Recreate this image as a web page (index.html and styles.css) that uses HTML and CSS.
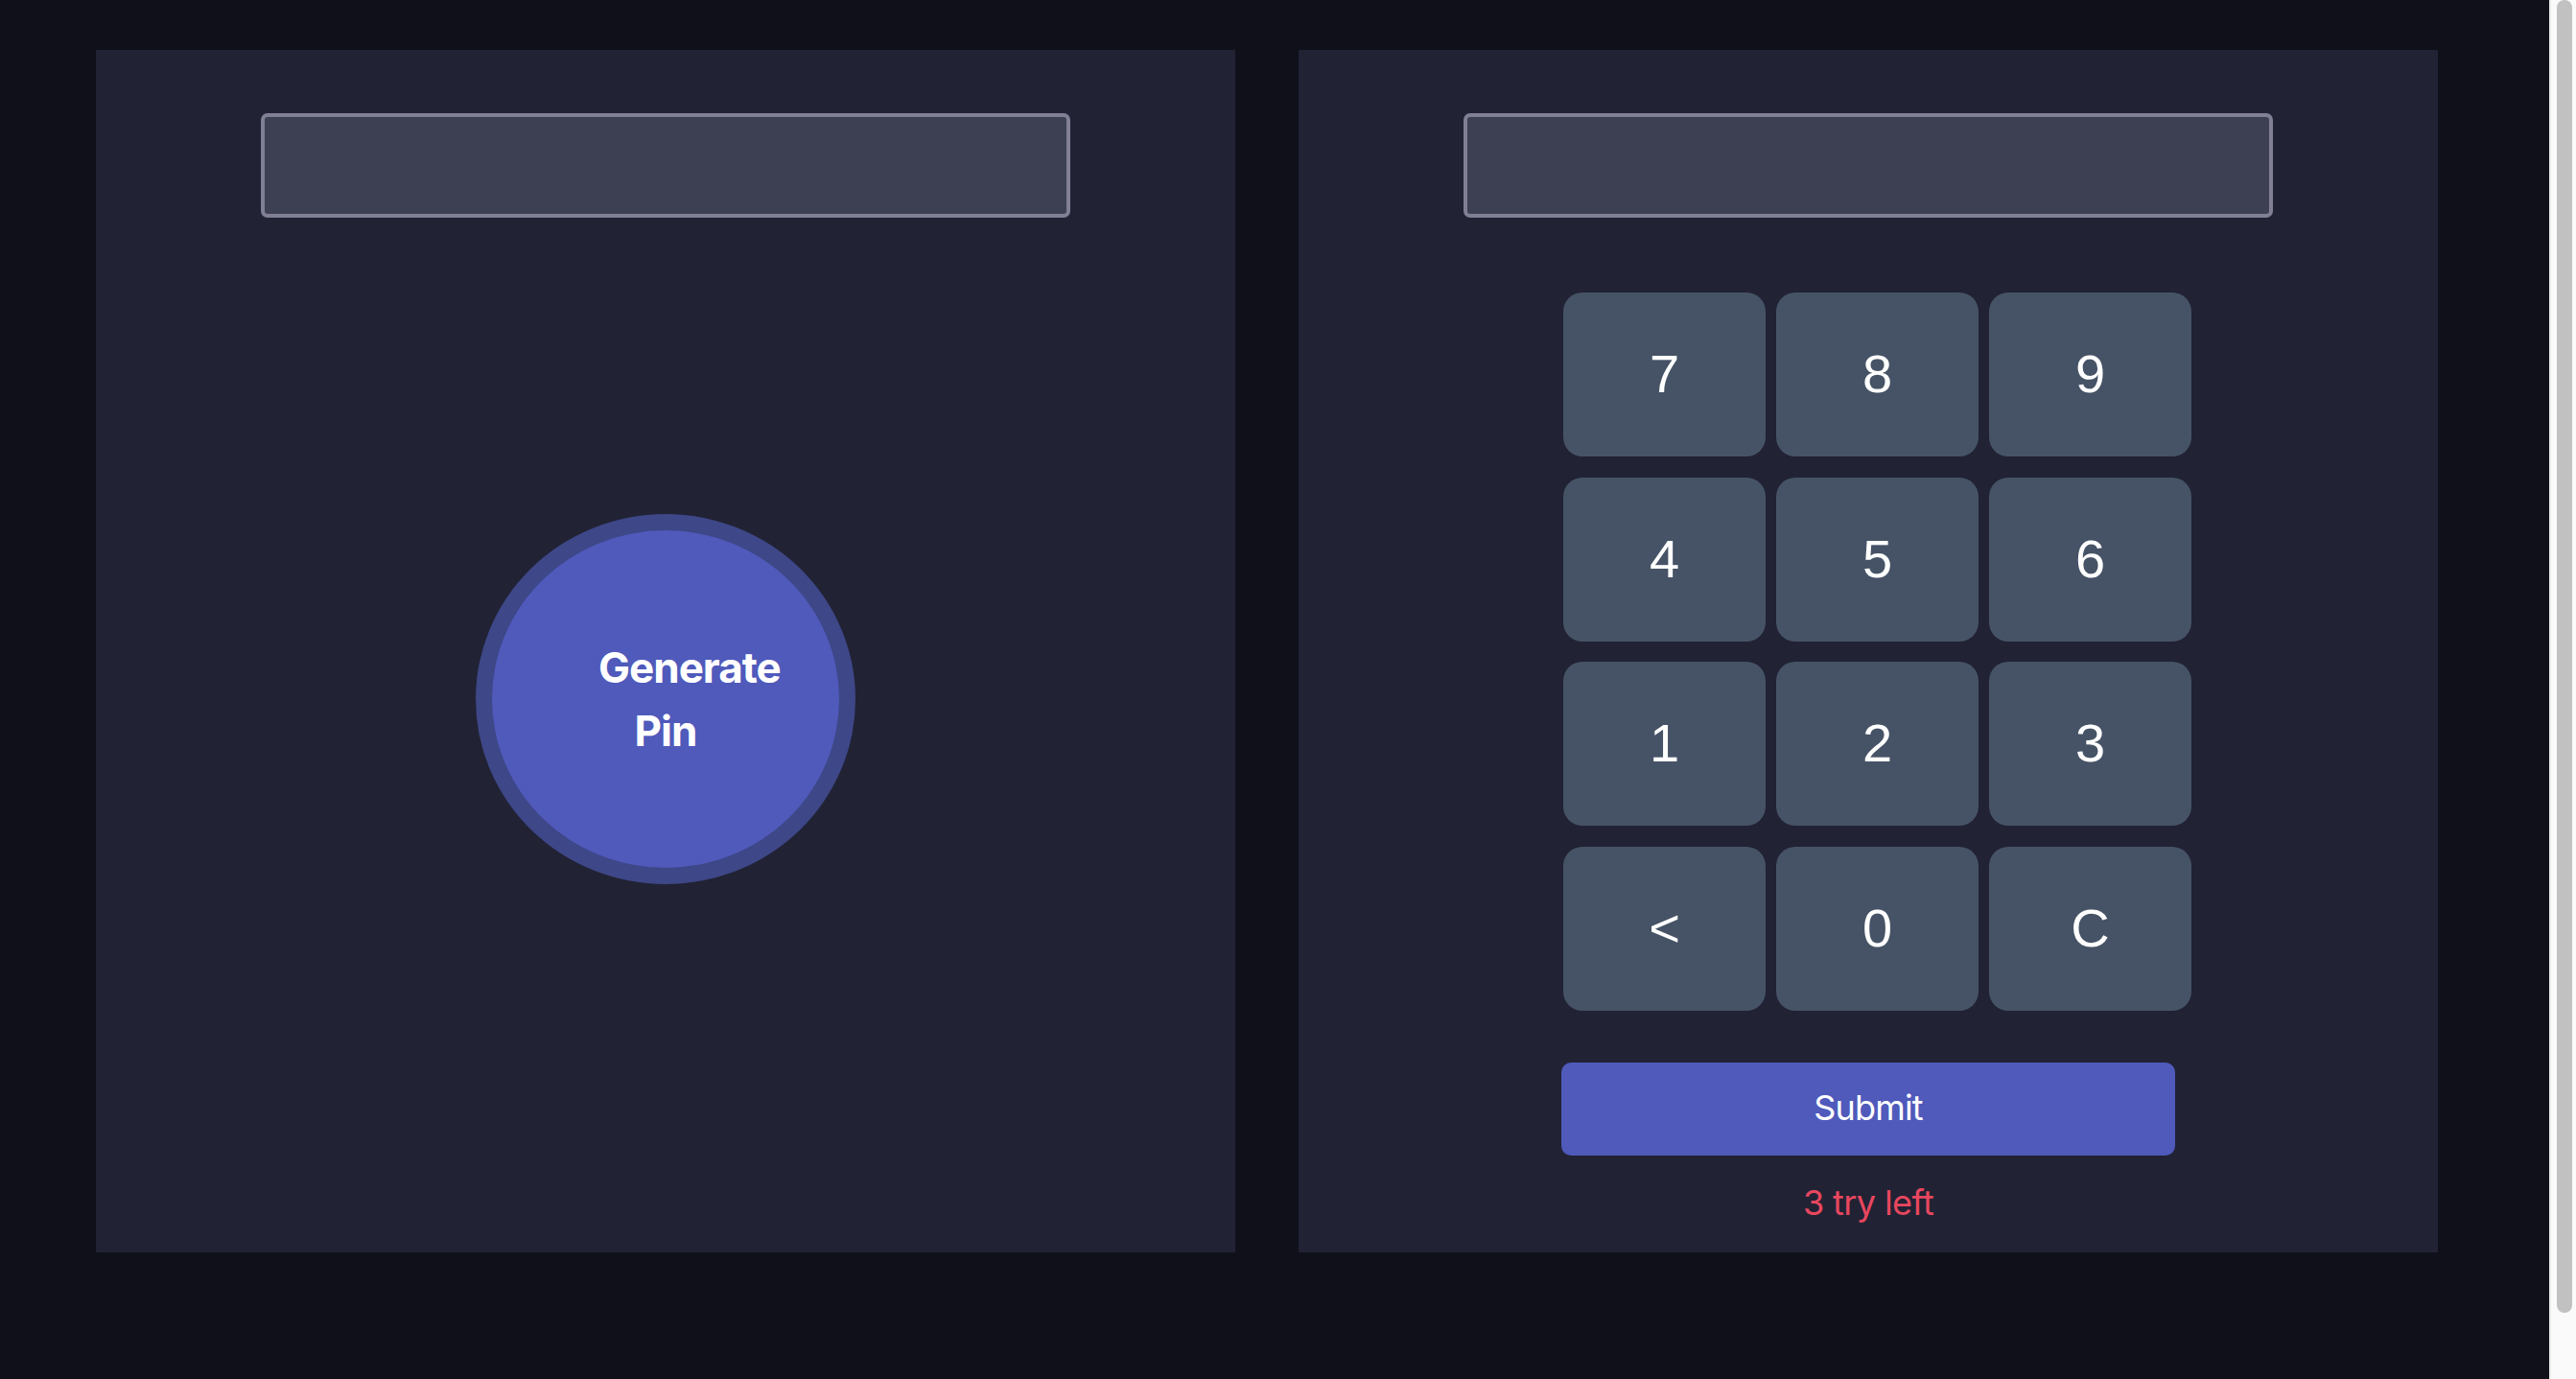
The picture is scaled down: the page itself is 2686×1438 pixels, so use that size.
FILE: index.html
```html
<!DOCTYPE html>
<html lang="en">
<head>
<meta charset="utf-8">
<title>Pin Matcher</title>
<link rel="stylesheet" href="styles.css">
</head>
<body>
<main class="app">
  <section class="panel">
    <input class="display" type="text" readonly>
    <button class="generate">Generate Pin</button>
  </section>
  <section class="panel">
    <input class="display" type="text" readonly>
    <div class="keypad">
      <button class="key">7</button>
      <button class="key">8</button>
      <button class="key">9</button>
      <button class="key">4</button>
      <button class="key">5</button>
      <button class="key">6</button>
      <button class="key">1</button>
      <button class="key">2</button>
      <button class="key">3</button>
      <button class="key">&lt;</button>
      <button class="key">0</button>
      <button class="key">C</button>
    </div>
    <button class="submit">Submit</button>
    <p class="tries">3 try left</p>
  </section>
</main>
<div class="scrollbar"><div class="thumb"></div></div>
</body>
</html>
```

FILE: styles.css
```css
html, body {
  margin: 0;
  height: 1438px;
  overflow: hidden;
}

body {
  display: flex;
  background: #10101a;
  font-family: Inter, "Noto Sans", sans-serif;
}

.app {
  flex: 1;
  display: flex;
  align-items: flex-start;
  gap: 66px;
  padding: 52px 116px 0 100px;
}

.panel {
  width: 1188px;
  height: 1254px;
  box-sizing: border-box;
  background: #212234;
  display: flex;
  flex-direction: column;
  align-items: center;
  padding-top: 66px;
}

.display {
  width: 844px;
  height: 109px;
  box-sizing: border-box;
  border: 4px solid #817f95;
  border-radius: 7px;
  background: #3d4052;
  outline: none;
  margin: 0;
  padding: 0 20px;
}

.generate {
  margin-top: 326px;
  width: 362px;
  height: 352px;
  box-sizing: border-box;
  padding: 0 111px;
  border: none;
  border-radius: 50%;
  background: #4f5abb;
  box-shadow: 0 0 0 17px #3e4787;
  color: #ffffff;
  font-family: Inter, "Noto Sans", sans-serif;
  font-weight: 700;
  font-size: 44px;
  letter-spacing: -1px;
  line-height: 66px;
  text-align: center;
}

.keypad {
  margin-top: 78px;
  margin-left: 19px;
  display: grid;
  grid-template-columns: repeat(3, 211px);
  grid-auto-rows: 171px;
  column-gap: 11px;
  row-gap: 21.5px;
}

.key {
  border: none;
  border-radius: 20px;
  background: #465366;
  color: #ffffff;
  font-family: "Liberation Sans", Arial, sans-serif;
  font-size: 56px;
  padding: 0 0 2px;
}

.submit {
  margin-top: 54px;
  width: 640px;
  height: 97px;
  border: none;
  border-radius: 10px;
  background: #4f5abb;
  color: #ffffff;
  font-family: Inter, "Noto Sans", sans-serif;
  font-size: 36px;
  font-weight: 400;
  letter-spacing: -0.8px;
  padding: 0 0 2px;
}

.tries {
  margin: 22px 0 0;
  color: #e8475f;
  font-size: 36px;
  letter-spacing: -0.6px;
  line-height: 54px;
}

.scrollbar {
  width: 28px;
  box-sizing: border-box;
  background: #fafafa;
  border-left: 2px solid #ebebeb;
  padding: 0 4px 0 6px;
}

.thumb {
  height: 1369px;
  background: #c1c1c1;
  border-radius: 8px;
}
```
